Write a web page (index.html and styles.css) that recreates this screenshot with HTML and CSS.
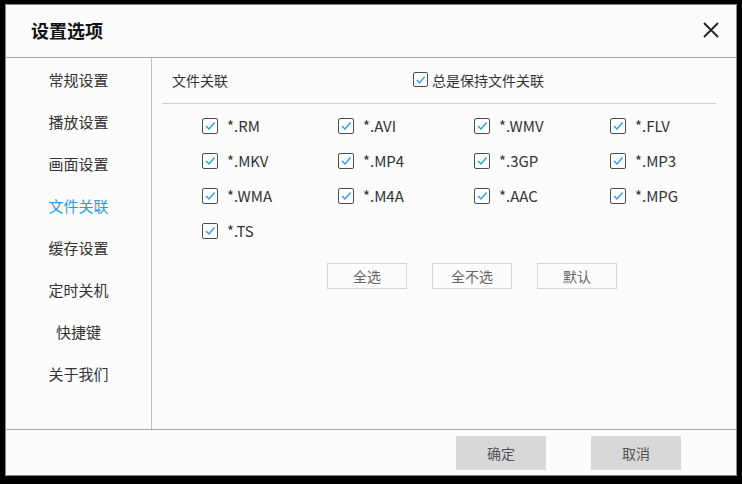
FILE: index.html
```html
<!DOCTYPE html>
<html lang="zh-CN">
<head>
<meta charset="utf-8">
<title>设置选项</title>
<link rel="stylesheet" href="styles.css">
</head>
<body>
<div class="dialog">
  <div class="header">
    <span class="title">设置选项</span>
    <svg class="close" width="16" height="16" viewBox="0 0 16 16"><path d="M1 1 L15 15 M15 1 L1 15" stroke="#222" stroke-width="1.8" fill="none"/></svg>
  </div>
  <div class="main">
    <div class="sidebar">
      <div class="nav-item">常规设置</div>
      <div class="nav-item">播放设置</div>
      <div class="nav-item">画面设置</div>
      <div class="nav-item active">文件关联</div>
      <div class="nav-item">缓存设置</div>
      <div class="nav-item">定时关机</div>
      <div class="nav-item">快捷键</div>
      <div class="nav-item">关于我们</div>
    </div>
    <div class="content">
      <div class="section-head">
        <span class="section-title">文件关联</span>
        <label class="check"><span class="box"><svg width="14" height="14" viewBox="0 0 14 14"><path d="M3 7 L6 10 L11.5 3.5" stroke="#1e9cf0" stroke-width="1.3" fill="none"/></svg></span><span>总是保持文件关联</span></label>
      </div>
      <div class="grid">
        <label class="check"><span class="box"><svg width="14" height="14" viewBox="0 0 14 14"><path d="M3 7 L6 10 L11.5 3.5" stroke="#1e9cf0" stroke-width="1.3" fill="none"/></svg></span><span>*.RM</span></label>
        <label class="check"><span class="box"><svg width="14" height="14" viewBox="0 0 14 14"><path d="M3 7 L6 10 L11.5 3.5" stroke="#1e9cf0" stroke-width="1.3" fill="none"/></svg></span><span>*.AVI</span></label>
        <label class="check"><span class="box"><svg width="14" height="14" viewBox="0 0 14 14"><path d="M3 7 L6 10 L11.5 3.5" stroke="#1e9cf0" stroke-width="1.3" fill="none"/></svg></span><span>*.WMV</span></label>
        <label class="check"><span class="box"><svg width="14" height="14" viewBox="0 0 14 14"><path d="M3 7 L6 10 L11.5 3.5" stroke="#1e9cf0" stroke-width="1.3" fill="none"/></svg></span><span>*.FLV</span></label>
        <label class="check"><span class="box"><svg width="14" height="14" viewBox="0 0 14 14"><path d="M3 7 L6 10 L11.5 3.5" stroke="#1e9cf0" stroke-width="1.3" fill="none"/></svg></span><span>*.MKV</span></label>
        <label class="check"><span class="box"><svg width="14" height="14" viewBox="0 0 14 14"><path d="M3 7 L6 10 L11.5 3.5" stroke="#1e9cf0" stroke-width="1.3" fill="none"/></svg></span><span>*.MP4</span></label>
        <label class="check"><span class="box"><svg width="14" height="14" viewBox="0 0 14 14"><path d="M3 7 L6 10 L11.5 3.5" stroke="#1e9cf0" stroke-width="1.3" fill="none"/></svg></span><span>*.3GP</span></label>
        <label class="check"><span class="box"><svg width="14" height="14" viewBox="0 0 14 14"><path d="M3 7 L6 10 L11.5 3.5" stroke="#1e9cf0" stroke-width="1.3" fill="none"/></svg></span><span>*.MP3</span></label>
        <label class="check"><span class="box"><svg width="14" height="14" viewBox="0 0 14 14"><path d="M3 7 L6 10 L11.5 3.5" stroke="#1e9cf0" stroke-width="1.3" fill="none"/></svg></span><span>*.WMA</span></label>
        <label class="check"><span class="box"><svg width="14" height="14" viewBox="0 0 14 14"><path d="M3 7 L6 10 L11.5 3.5" stroke="#1e9cf0" stroke-width="1.3" fill="none"/></svg></span><span>*.M4A</span></label>
        <label class="check"><span class="box"><svg width="14" height="14" viewBox="0 0 14 14"><path d="M3 7 L6 10 L11.5 3.5" stroke="#1e9cf0" stroke-width="1.3" fill="none"/></svg></span><span>*.AAC</span></label>
        <label class="check"><span class="box"><svg width="14" height="14" viewBox="0 0 14 14"><path d="M3 7 L6 10 L11.5 3.5" stroke="#1e9cf0" stroke-width="1.3" fill="none"/></svg></span><span>*.MPG</span></label>
        <label class="check"><span class="box"><svg width="14" height="14" viewBox="0 0 14 14"><path d="M3 7 L6 10 L11.5 3.5" stroke="#1e9cf0" stroke-width="1.3" fill="none"/></svg></span><span>*.TS</span></label>
      </div>
      <div class="actions">
        <button class="btn">全选</button>
        <button class="btn">全不选</button>
        <button class="btn">默认</button>
      </div>
    </div>
  </div>
  <div class="footer">
    <button class="fbtn">确定</button>
    <button class="fbtn">取消</button>
  </div>
</div>
</body>
</html>
```

FILE: styles.css
```css
* { box-sizing: border-box; }
html, body {
  margin: 0;
  padding: 0;
  background: #000;
  width: 742px;
  height: 484px;
  overflow: hidden;
}
body {
  padding: 4px 0 0 5px;
  font-family: "Noto Sans CJK SC", "Noto Sans", sans-serif;
  color: #333;
}
.dialog {
  width: 732px;
  height: 472px;
  background: #fcfcfc;
  border: 1px solid #8a8a8a;
  display: flex;
  flex-direction: column;
}
.header {
  height: 53px;
  border-bottom: 1px solid #a8a8a8;
  display: flex;
  align-items: center;
  justify-content: space-between;
  padding: 0 17px 0 25px;
  flex: none;
}
.title {
  font-size: 18px;
  font-weight: bold;
  color: #111;
  line-height: 20px;
  margin-top: -2px;
}
.close { display: block; margin-top: -3px; }
.main {
  flex: 1;
  display: flex;
  border-bottom: 1px solid #a8a8a8;
}
.sidebar {
  width: 146px;
  border-right: 1px solid #bdbdbd;
  padding-top: 1px;
  flex: none;
}
.nav-item {
  height: 42px;
  line-height: 42px;
  text-align: center;
  font-size: 15px;
  color: #333;
}
.nav-item.active { color: #1e9cf0; }
.content {
  flex: 1;
  min-width: 0;
  padding: 0 20px 0 10px;
}
.section-head {
  height: 46px;
  border-bottom: 1px solid #cfcfcf;
  display: flex;
  align-items: center;
  padding-left: 10px;
  padding-bottom: 2px;
}
.section-title {
  width: 241px;
  font-size: 14px;
  color: #333;
}
.check {
  display: flex;
  align-items: center;
  font-size: 15px;
  color: #333;
  white-space: nowrap;
}
.section-head .check { font-size: 14px; }
.section-head .check .box { margin-right: 4px; width: 15px; height: 15px; }
.box {
  width: 16px;
  height: 16px;
  border: 1px solid #4b4b57;
  border-radius: 2px;
  display: inline-flex;
  align-items: center;
  justify-content: center;
  margin-right: 9px;
  background: #fff;
  flex: none;
}
.grid {
  display: grid;
  grid-template-columns: 136px 136px 136px auto;
  grid-auto-rows: 35px;
  padding: 4px 0 0 40px;
  align-items: center;
}
.actions {
  display: flex;
  gap: 25px;
  padding-left: 165px;
  margin-top: 15px;
}
.btn {
  width: 80px;
  height: 26px;
  border: 1px solid #d6d6d6;
  background: #fcfcfc;
  color: #666;
  font-family: inherit;
  font-size: 14px;
  padding: 0;
}
.footer {
  height: 45px;
  display: flex;
  align-items: center;
  padding-left: 450px;
  gap: 45px;
  flex: none;
}
.fbtn {
  width: 90px;
  height: 34px;
  border: none;
  background: #d8d8d8;
  color: #555;
  font-family: inherit;
  font-size: 14px;
  padding: 0;
}
```
